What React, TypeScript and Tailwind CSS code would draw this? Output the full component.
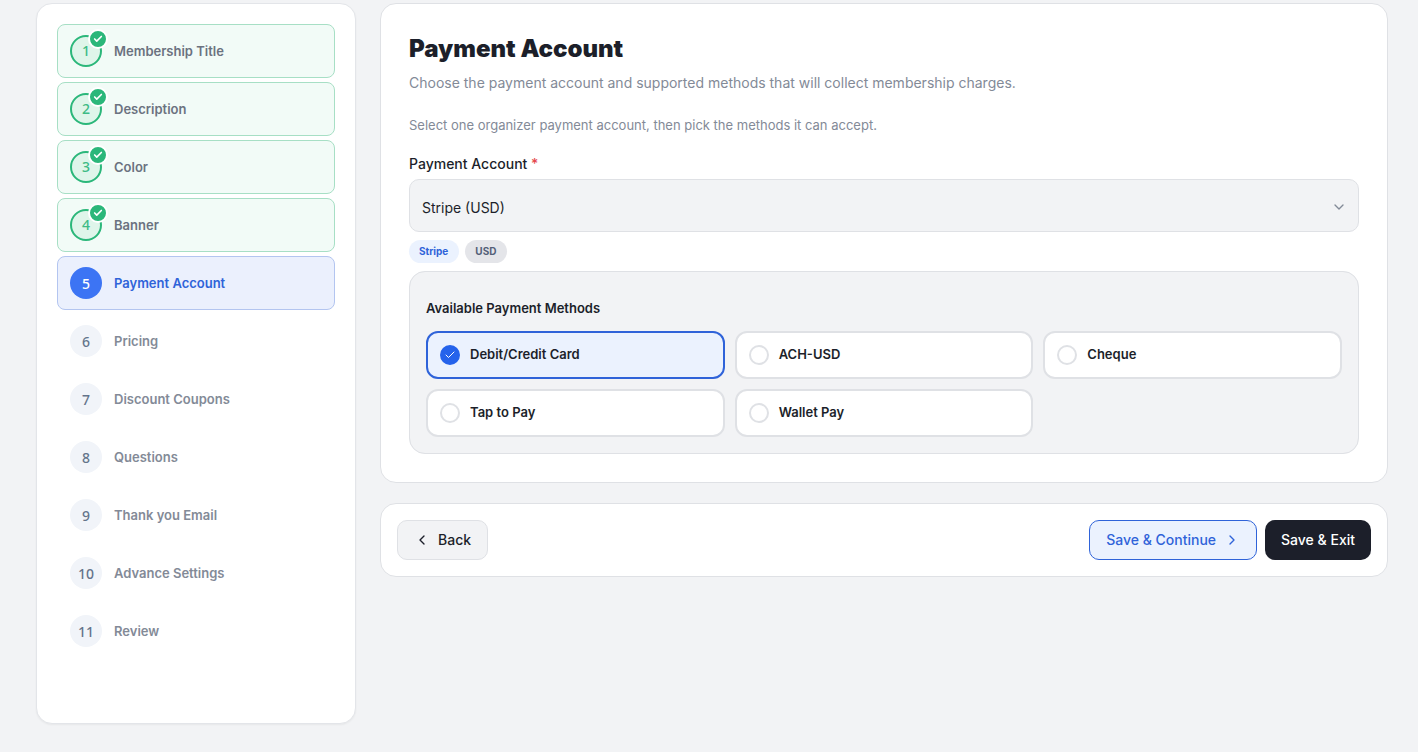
import { Check, ChevronDown, ChevronLeft, ChevronRight } from "lucide-react"
import clsx from "clsx"
import { useState } from "react"

const steps = [
  "Membership Title",
  "Description",
  "Color",
  "Banner",
  "Payment Account",
  "Pricing",
  "Discount Coupons",
  "Questions",
  "Thank you Email",
  "Advance Settings",
  "Review",
]

const methods = ["Debit/Credit Card", "ACH-USD", "Cheque", "Tap to Pay", "Wallet Pay"]

const CURRENT = 4

function Step({ index, label }: { index: number; label: string }) {
  const done = index < CURRENT
  const active = index === CURRENT

  return (
    <li>
      <button
        type="button"
        aria-current={active ? "step" : undefined}
        className={clsx(
          "flex w-full items-center gap-3 rounded-lg border px-3 py-[10px] text-left",
          done && "border-[#a7dfc5] bg-[#f2fbf7]",
          active && "border-[#b3c5f0] bg-[#ebf0fd]",
          !done && !active && "border-transparent",
        )}
      >
        <span
          className={clsx(
            "relative flex size-8 shrink-0 items-center justify-center rounded-full font-['Noto_Sans',sans-serif] text-sm font-medium",
            done && "border-2 border-[#2bb77a] bg-[#dff5ea] text-[#3dbb85]",
            active && "bg-[#3c74f4] pt-px text-white",
            !done && !active && "bg-[#f1f4f9] pt-px text-[#64748b]",
          )}
        >
          {index + 1}
          {done && (
            <span className="absolute -top-2 -right-2 flex size-5 items-center justify-center rounded-full border-2 border-white bg-[#2bb77a] text-white">
              <Check className="size-[10px]" strokeWidth={4} />
            </span>
          )}
        </span>
        <span
          className={clsx(
            "text-[13px] leading-5 font-semibold",
            done && "text-[#6b7280]",
            active && "pb-px text-[#2f63d9]",
            !done && !active && "pb-px text-[#838a97]",
          )}
        >
          {label}
        </span>
      </button>
    </li>
  )
}

function Method({ label, checked, onChange }: { label: string; checked: boolean; onChange: () => void }) {
  return (
    <label
      className={clsx(
        "flex h-12 cursor-pointer items-center gap-[10px] rounded-xl border-2 px-3",
        checked ? "border-[#2f63d9] bg-[#ebf2fe]" : "border-[#dfe1e5] bg-white",
      )}
    >
      <span className="relative flex size-5 shrink-0">
        <input
          type="checkbox"
          checked={checked}
          onChange={onChange}
          className="size-5 appearance-none rounded-full border-2 border-[#dfe1e5] bg-white checked:border-[#2563eb] checked:bg-[#2563eb]"
        />
        {checked && (
          <Check className="pointer-events-none absolute inset-1 size-3 text-white" strokeWidth={2} />
        )}
      </span>
      <span className="pb-[2px] text-[13px] leading-5 font-semibold">{label}</span>
    </label>
  )
}

export default function App() {
  const [selected, setSelected] = useState(["Debit/Credit Card"])

  const toggle = (m: string) =>
    setSelected((s) => (s.includes(m) ? s.filter((x) => x !== m) : [...s, m]))

  return (
    <div className="flex min-h-screen items-start gap-6 bg-[#f2f3f5] pt-[3px] pr-[30px] pb-7 pl-9 font-[Inter,sans-serif] text-[#1c1f2a]">
      {/* Steps */}
      <nav className="w-80 shrink-0 rounded-2xl border border-[#e3e5e9] bg-white p-5 pb-[65px] shadow-xs">
        <ol className="flex flex-col gap-1">
          {steps.map((label, i) => (
            <Step key={label} index={i} label={label} />
          ))}
        </ol>
      </nav>

      <main className="flex min-w-0 flex-1 flex-col gap-5">
        <section className="rounded-2xl border border-[#dfe1e5] bg-white p-7">
          <h1 className="text-2xl leading-[34px] font-black">Payment Account</h1>
          <p className="mt-[5px] text-sm leading-6 text-[#838a97]">
            Choose the payment account and supported methods that will collect membership charges.
          </p>
          <p className="mt-5 text-[13px] leading-5 text-[#838a97]">
            Select one organizer payment account, then pick the methods it can accept.
          </p>

          <label htmlFor="account" className="mt-[19px] block text-sm leading-5 font-medium">
            Payment Account <span className="text-[#e5484d]">*</span>
          </label>
          <div className="relative mt-[5px]">
            <select
              id="account"
              className="block h-[53px] w-full appearance-none rounded-[10px] border border-[#dfe1e5] bg-[#f2f3f5] px-3 pt-1 text-sm"
            >
              <option>Stripe (USD)</option>
            </select>
            <ChevronDown className="pointer-events-none absolute top-5 right-3 size-4 text-[#838a97]" />
          </div>

          <div className="mt-2 flex gap-[6px] text-[10px] leading-[23px] font-bold">
            <span className="rounded-full bg-[#ebf2fe] pr-[11px] pl-[10px] text-[#2f63d9]">Stripe</span>
            <span className="rounded-full bg-[#e4e5e9] pr-[11px] pl-[10px] text-[#536078]">USD</span>
          </div>

          {/* Payment methods */}
          <fieldset className="mt-2 rounded-2xl border border-[#dfe1e5] bg-[#f2f3f5] px-4 pt-[26px] pb-4">
            <h2 className="text-[13px] leading-5 font-semibold">Available Payment Methods</h2>
            <div className="mt-[13px] grid grid-cols-3 gap-[10px]">
              {methods.map((m) => (
                <Method key={m} label={m} checked={selected.includes(m)} onChange={() => toggle(m)} />
              ))}
            </div>
          </fieldset>
        </section>

        {/* Actions */}
        <footer className="flex items-center gap-2 rounded-2xl border border-[#dfe1e5] bg-white p-4 text-sm font-medium">
          <button
            type="button"
            className="mr-auto flex h-10 items-center gap-2 rounded-[10px] border border-[#dfe1e5] bg-[#f2f3f5] px-4"
          >
            <ChevronLeft className="size-4" />
            Back
          </button>
          <button
            type="button"
            className="flex h-10 items-center gap-2 rounded-[10px] border border-[#2f63d9] bg-[#ebf2fe] px-4 text-[#2f63d9]"
          >
            Save &amp; Continue
            <ChevronRight className="size-4" />
          </button>
          <button type="button" className="h-10 rounded-[10px] bg-[#1c1f2a] px-4 text-white">
            Save &amp; Exit
          </button>
        </footer>
      </main>
    </div>
  )
}
